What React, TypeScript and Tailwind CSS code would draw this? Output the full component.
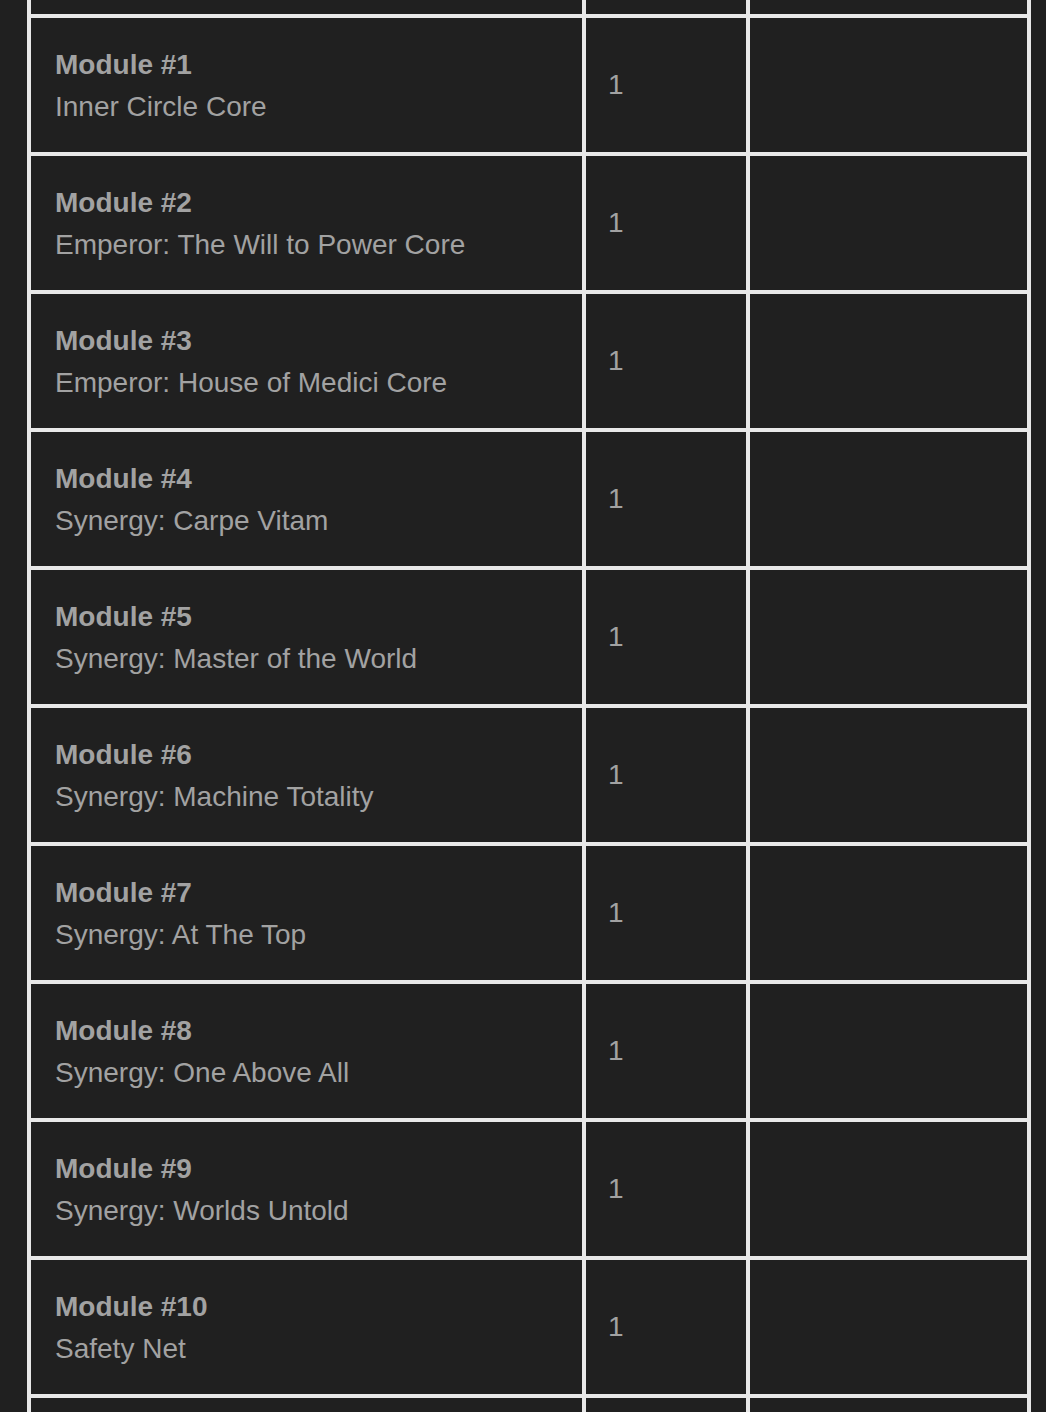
const modules = [
  "Inner Circle Core",
  "Emperor: The Will to Power Core",
  "Emperor: House of Medici Core",
  "Synergy: Carpe Vitam",
  "Synergy: Master of the World",
  "Synergy: Machine Totality",
  "Synergy: At The Top",
  "Synergy: One Above All",
  "Synergy: Worlds Untold",
  "Safety Net",
]

function Cell({ children, className = "" }: { children?: React.ReactNode; className?: string }) {
  return <div className={`bg-[#202020] flex flex-col justify-center ${className}`}>{children}</div>
}

export default function App() {
  return (
    <div className="min-h-[1412px] h-[1412px] overflow-hidden bg-[#202020] font-['Liberation_Sans',Arial,sans-serif] text-[28px] leading-[42px] text-[#a2a2a2]">
      <div className="ml-[27px] w-[1004px] bg-[#e8e8e8] px-[4px] grid grid-cols-[551px_160px_277px] gap-[4px]">
        <Cell className="h-[14px]" />
        <Cell className="h-[14px]" />
        <Cell className="h-[14px]" />
        {modules.map((name, i) => (
          <div key={name} className="contents">
            <Cell className="h-[134px] pl-[24px] pt-[2px]">
              <div className="font-bold">Module #{i + 1}</div>
              <div>{name}</div>
            </Cell>
            <Cell className="h-[134px] pl-[22px]">
              <div>1</div>
            </Cell>
            <Cell className="h-[134px]" />
          </div>
        ))}
        <Cell className="h-[40px]" />
        <Cell className="h-[40px]" />
        <Cell className="h-[40px]" />
      </div>
    </div>
  )
}
